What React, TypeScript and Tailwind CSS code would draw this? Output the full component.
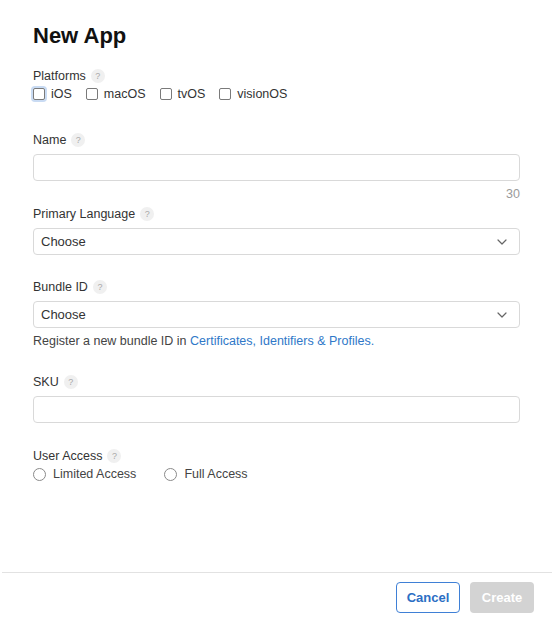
import React from "react";

function Help() {
  return (
    <span className="ml-[5px] inline-flex h-[14px] w-[14px] items-center justify-center rounded-full bg-[#f0f0f0] text-[9px] leading-none text-[#a9a9a9]">
      ?
    </span>
  );
}

function Label({ children, className = "" }: { children: React.ReactNode; className?: string }) {
  return (
    <div className={`flex h-4 items-center text-[12.5px] leading-4 text-[#333] ${className}`}>
      {children}
      <Help />
    </div>
  );
}

function Checkbox({ label, focused = false }: { label: string; focused?: boolean }) {
  return (
    <label className="flex items-center gap-[6px]">
      <span
        className={`h-3 w-3 rounded-[2px] border border-[#7a7a7a] bg-white ${
          focused ? "ring-2 ring-[#c9dbf3]" : ""
        }`}
      />
      <span>{label}</span>
    </label>
  );
}

function Radio({ label }: { label: string }) {
  return (
    <label className="flex items-center gap-[7px]">
      <span className="h-[13px] w-[13px] rounded-full border border-[#8a8a8a] bg-white" />
      <span>{label}</span>
    </label>
  );
}

function TextInput() {
  return <div className="mt-[6px] h-[27px] w-full rounded-[4px] border border-[#d9d9d9] bg-white" />;
}

function Select() {
  return (
    <div className="mt-[6px] flex h-[27px] w-full items-center justify-between rounded-[4px] border border-[#d9d9d9] bg-white pl-[7px] pr-[12px] text-[13px] text-[#333]">
      <span>Choose</span>
      <svg width="10" height="6" viewBox="0 0 10 6" fill="none">
        <path d="M1 1l4 4 4-4" stroke="#666" strokeWidth="1.2" strokeLinecap="round" strokeLinejoin="round" />
      </svg>
    </div>
  );
}

export default function App() {
  return (
    <div
      className="flex h-[640px] w-[560px] flex-col bg-white text-[#333]"
      style={{ fontFamily: '"Liberation Sans", Arial, sans-serif' }}
    >
      <div className="w-[553px] px-[33px] pt-[22px]">
        <h1 className="text-[22px] font-bold leading-[28px] text-[#111]">New App</h1>

        <Label className="mt-[18px]">Platforms</Label>
        <div className="mt-[2px] flex h-4 items-center gap-[14px] text-[12.5px] text-[#333]">
          <Checkbox label="iOS" focused />
          <Checkbox label="macOS" />
          <Checkbox label="tvOS" />
          <Checkbox label="visionOS" />
        </div>

        <Label className="mt-[30px]">Name</Label>
        <TextInput />
        <div className="mt-[5px] text-right text-[12.5px] leading-4 text-[#9a9a9a]">30</div>

        <Label className="mt-[4px]">Primary Language</Label>
        <Select />

        <Label className="mt-[24px]">Bundle ID</Label>
        <Select />
        <div className="mt-[5px] text-[12.5px] leading-4 text-[#444]">
          Register a new bundle ID in{" "}
          <span className="text-[#2f78c8]">Certificates, Identifiers &amp; Profiles.</span>
        </div>

        <Label className="mt-[25px]">SKU</Label>
        <TextInput />

        <Label className="mt-[25px]">User Access</Label>
        <div className="mt-[2px] flex h-4 items-center gap-[28px] text-[12.5px] text-[#444]">
          <Radio label="Limited Access" />
          <Radio label="Full Access" />
        </div>
      </div>

      <div className="mt-auto ml-[2px] flex h-[68px] w-[550px] justify-end gap-[10px] border-t border-[#e2e2e2] pr-[18px] pt-[9px]">
        <button className="h-[31px] w-[64px] rounded-[4px] border border-[#3f80d6] bg-white text-[13px] font-bold text-[#2b6ec4]">
          Cancel
        </button>
        <button className="h-[31px] w-[64px] rounded-[4px] bg-[#d3d3d3] text-[13px] font-bold text-white">
          Create
        </button>
      </div>
    </div>
  );
}
